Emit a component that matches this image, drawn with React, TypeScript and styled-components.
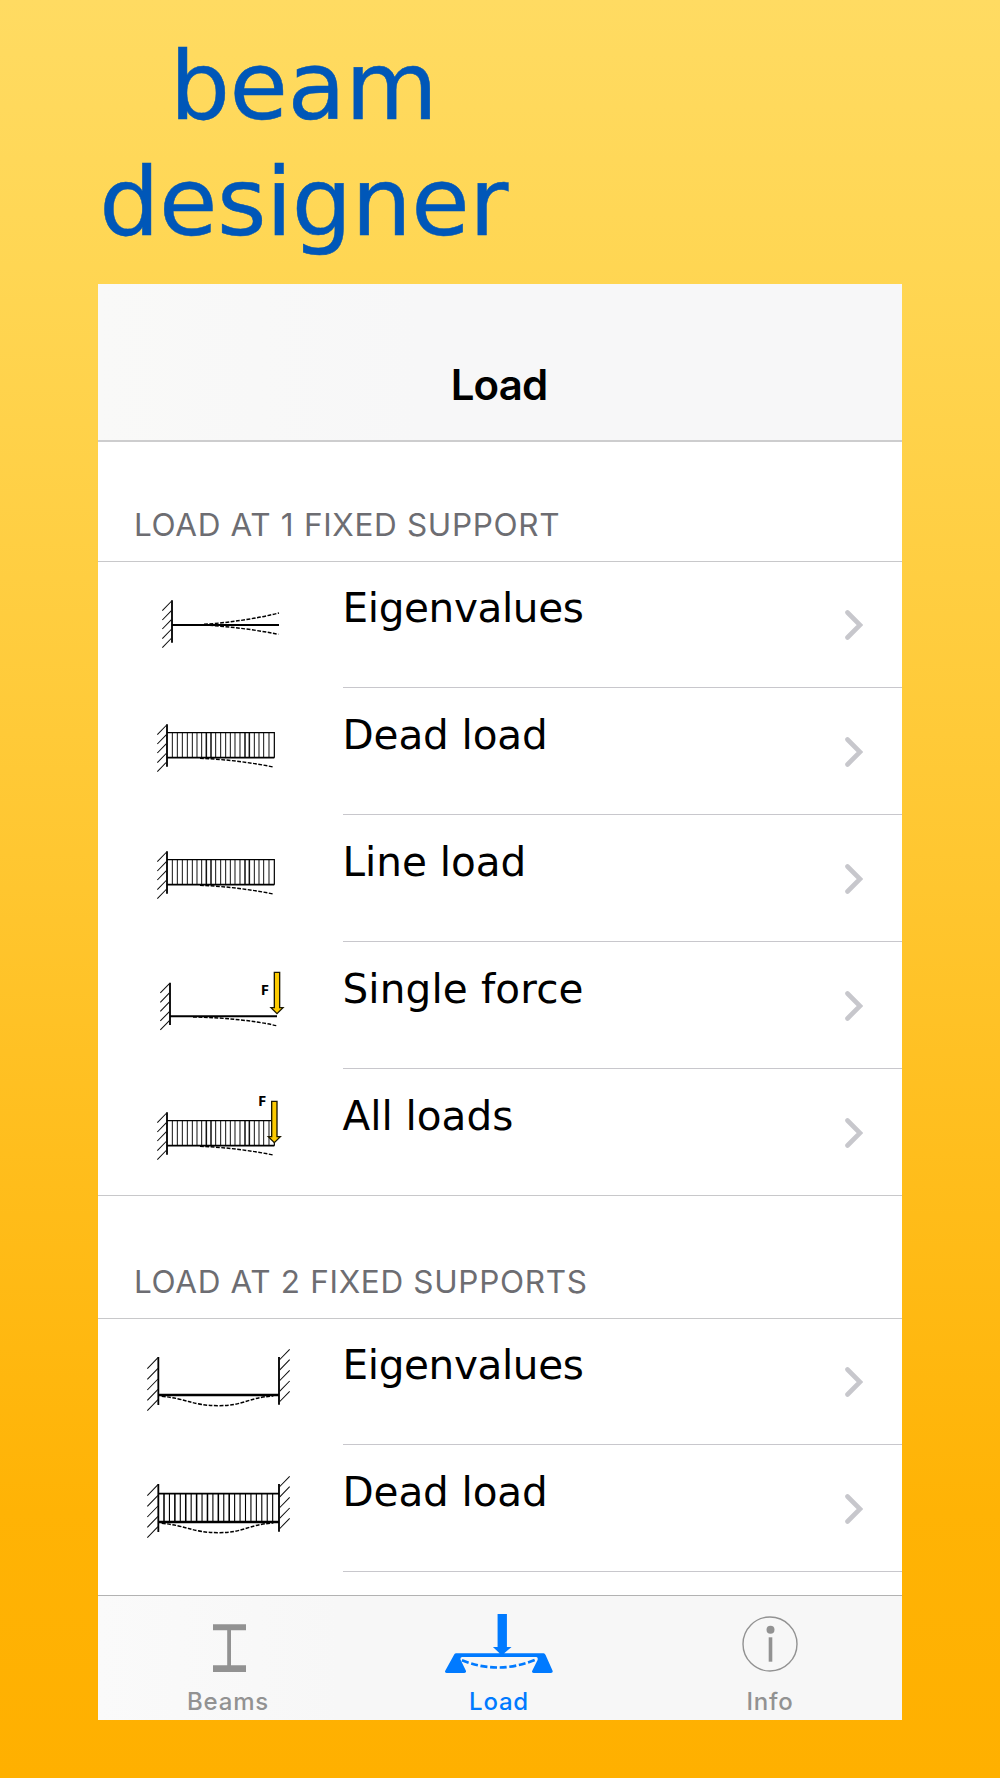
import React from "react";
import styled, { createGlobalStyle } from "styled-components";

const Global = createGlobalStyle`
  html, body { margin: 0; padding: 0; }
  body { font-family: Inter, "Liberation Sans", sans-serif; }
`;

const Poster = styled.div`
  box-sizing: border-box;
  width: 1000px;
  height: 1778px;
  padding: 28px 98px 58px 98px;
  display: flex;
  flex-direction: column;
  background: linear-gradient(180deg, #ffdb62 0%, #ffd653 15%, #ffc62f 50%, #ffb305 85%, #ffb000 100%);
  overflow: hidden;
`;

const Title = styled.h1`
  margin: 0;
  width: 411px;
  height: 256px;
  font: 400 95px/116px Verdana, "DejaVu Sans", sans-serif;
  letter-spacing: -0.5px;
  text-align: center;
  color: #0057b8;
  -webkit-text-stroke: 0.5px #0057b8;
`;

const Screen = styled.main`
  flex: none;
  width: 804px;
  height: 1435.5px;
  display: flex;
  flex-direction: column;
  background: #fff;
  overflow: hidden;
`;

const NavBar = styled.header`
  box-sizing: border-box;
  flex: none;
  height: 158px;
  padding: 75px 2px 0 0;
  border-bottom: 2px solid #cdcdce;
  background: linear-gradient(90deg, #f9f9f8, #f7f7f8 40%, #f7f7f8);
  font-size: 42px;
  font-weight: 600;
  line-height: 52px;
  letter-spacing: -0.9px;
  text-align: center;
  color: #000;
`;

const List = styled.div`
  flex: 1;
  min-height: 0;
  overflow: hidden;
`;

const SectionTitle = styled.h2<{ $height: number }>`
  box-sizing: border-box;
  margin: 0;
  height: ${(p) => p.$height}px;
  padding: 0 0 16px 36px;
  display: flex;
  align-items: flex-end;
  border-bottom: 1px solid #c8c8ca;
  font-size: 31.5px;
  font-weight: 400;
  line-height: 40px;
  letter-spacing: 0.67px;
  color: #6d6d72;
`;

const Row = styled.div<{ $first?: boolean; $last?: boolean }>`
  height: ${(p) => (p.$first ? 126 : 127)}px;
  display: flex;
  box-shadow: ${(p) => (p.$last ? "inset 0 -1px #c8c8ca" : "none")};
`;

const Diagram = styled.svg`
  flex: none;
  width: 245px;
  height: 126px;
  overflow: visible;
`;

const RowBody = styled.div<{ $first?: boolean; $last?: boolean }>`
  box-sizing: border-box;
  flex: 1;
  display: flex;
  justify-content: space-between;
  padding: ${(p) => (p.$first ? 0 : 1)}px 39px 0 0;
  border-bottom: 1px solid ${(p) => (p.$last ? "transparent" : "#c8c7cc")};
`;

const RowLabel = styled.span<{ $tracking?: number }>`
  margin-top: 21px;
  margin-left: -0.5px;
  font: 400 40.5px/50px Verdana, "DejaVu Sans", sans-serif;
  letter-spacing: ${(p) => p.$tracking ?? 0}px;
  color: #000;
`;

const Chevron = styled.svg`
  width: 18px;
  height: 30px;
  margin-top: 48px;
`;

const TabBar = styled.nav`
  box-sizing: border-box;
  flex: none;
  height: 124.5px;
  display: flex;
  justify-content: space-between;
  padding-right: 2px;
  border-top: 1px solid #b2b2b2;
  background: linear-gradient(90deg, #fafafa, #f7f7f7 30%, #f7f7f7);
`;

const Tab = styled.div<{ $active?: boolean }>`
  width: 260px;
  display: flex;
  flex-direction: column;
  align-items: center;
  color: ${(p) => (p.$active ? "#007aff" : "#929292")};
  font-size: 24px;
  font-weight: 500;
  line-height: 30px;
  letter-spacing: 0.8px;
`;

const TabIcon = styled.svg`
  width: 120px;
  height: 91px;
`;

type Pt = [number, number];

const Hatches = ({ starts, dx, dy }: { starts: Pt[]; dx: number; dy: number }) => (
  <path
    d={starts.map(([x, y]) => `M${x} ${y}l${dx} ${dy}`).join("")}
    stroke="#111"
    strokeWidth="3.2"
    fill="none"
  />
);

const Wall = ({ x, y, height = 127 }: { x: number; y: number; height?: number }) => (
  <>
    <path d={`M${x} ${y}v${height}`} stroke="#000" strokeWidth="5.5" />
    <Hatches starts={[2, 30, 57, 86, 113].map((o) => [x - 1, y + o] as Pt)} dx={-28} dy={29} />
  </>
);

const Dashed = ({ d }: { d: string }) => (
  <path d={d} fill="none" stroke="#000" strokeWidth="4.4" strokeDasharray="11.5 4.5" />
);

const Force = ({ x, y, labelY }: { x: number; y: number; labelY: number }) => (
  <>
    <path
      d={`M${x - 8} ${y}h16v106h10l-18 18l-18-18h10z`}
      fill="#fdcb00"
      stroke="#1c1800"
      strokeWidth="4"
    />
    <text
      x={x - 49}
      y={labelY}
      fontFamily='"Open Sans", sans-serif'
      fontWeight="700"
      fontSize="45"
    >
      F
    </text>
  </>
);

const BARS = [97, 112, 127, 142, 157, 171, 185, 199, 213, 227, 242, 257, 271, 285, 300, 315, 328, 343, 357, 371, 387];
const HEAVY = [199, 213, 315, 328];

const LoadedCantilever = ({ force }: { force?: boolean }) => (
  <g>
    <Wall x={81} y={433} />
    {BARS.map((x) => (
      <path
        key={x}
        d={`M${x} 458V533`}
        stroke="#111"
        strokeWidth={HEAVY.includes(x) ? 4.6 : 3}
      />
    ))}
    <path d="M81 458H403V533" fill="none" stroke="#000" strokeWidth="3.6" />
    <path d="M81 533H403" stroke="#000" strokeWidth="5" />
    <Dashed d="M180 535Q290 539 400 561" />
    {force && <Force x={403} y={400} labelY={414} />}
  </g>
);

const Cantilever = ({ force }: { force?: boolean }) => (
  <g>
    <Wall x={96} y={61} />
    {force ? (
      <>
        <path d="M96 162H417" stroke="#000" strokeWidth="6" />
        <Dashed d="M165 164Q310 167 415 190" />
        <Force x={417} y={30} labelY={97} />
      </>
    ) : (
      <>
        <path d="M96 135H417" stroke="#000" strokeWidth="6" />
        <Dashed d="M192 133Q310 125 417 99" />
        <Dashed d="M192 135Q310 142 415 163" />
      </>
    )}
  </g>
);

const FixedBoth = ({ loaded }: { loaded?: boolean }) => (
  <g>
    <path d="M85 81V225M447 81V224" stroke="#000" strokeWidth="5.5" />
    <Hatches starts={[83, 115, 147, 178, 209].map((y) => [84, y] as Pt)} dx={-32} dy={33} />
    <Hatches starts={[90, 121, 153, 185, 216].map((y) => [448, y] as Pt)} dx={31} dy={-32} />
    {loaded && (
      <>
        <path d="M85 110H447" stroke="#000" strokeWidth="5" />
        {Array.from({ length: 21 }, (_, i) => 102 + i * 16.3).map((x, i) => (
          <path
            key={i}
            d={`M${x} 110V194`}
            stroke="#000"
            strokeWidth={[0, 2, 4, 6, 8, 10, 12].includes(i) ? 4.6 : 3.3}
          />
        ))}
      </>
    )}
    <path d="M85 195H447" stroke="#000" strokeWidth="7" />
    <Dashed d="M95 199C170 205 185 227 265 227C345 227 350 203 430 198" />
  </g>
);

const DRAWINGS: Record<string, { dx: number; dy: number; node: React.ReactNode }> = {
  swing: { dx: 42, dy: 18, node: <Cantilever /> },
  dead: { dx: 42, dy: -108, node: <LoadedCantilever /> },
  force: { dx: 40, dy: 20.3, node: <Cantilever force /> },
  all: { dx: 42, dy: -101, node: <LoadedCantilever force /> },
  fixed: { dx: 32, dy: 11, node: <FixedBoth /> },
  fixedDead: { dx: 32, dy: 12, node: <FixedBoth loaded /> },
};

type Item = { label: string; drawing: string; tracking?: number; last?: boolean };

const SECTIONS: { title: string; height: number; items: Item[] }[] = [
  {
    title: "LOAD AT 1 FIXED SUPPORT",
    height: 120,
    items: [
      { label: "Eigenvalues", drawing: "swing", tracking: -0.35 },
      { label: "Dead load", drawing: "dead", tracking: -0.1 },
      { label: "Line load", drawing: "dead" },
      { label: "Single force", drawing: "force", tracking: 0.15 },
      { label: "All loads", drawing: "all", last: true },
    ],
  },
  {
    title: "LOAD AT 2 FIXED SUPPORTS",
    height: 123,
    items: [
      { label: "Eigenvalues", drawing: "fixed", tracking: -0.35 },
      { label: "Dead load", drawing: "fixedDead", tracking: -0.1 },
    ],
  },
];

const ListRow = ({ item, first }: { item: Item; first: boolean }) => {
  const drawing = DRAWINGS[item.drawing];
  return (
    <Row $first={first} $last={item.last}>
      <Diagram viewBox="0 0 245 126">
        <g transform={`translate(${drawing.dx} ${drawing.dy}) scale(0.33333)`}>{drawing.node}</g>
      </Diagram>
      <RowBody $first={first} $last={item.last}>
        <RowLabel $tracking={item.tracking}>{item.label}</RowLabel>
        <Chevron viewBox="0 0 18 30">
          <path
            d="M2.500 2.500L15 15L2.500 27.500"
            fill="none"
            stroke="#c7c7cc"
            strokeWidth="4.6"
            strokeLinecap="round"
          />
        </Chevron>
      </RowBody>
    </Row>
  );
};

export default function App() {
  return (
    <>
      <Global />
      <Poster>
        <Title>
          beam
          <br />
          designer
        </Title>
        <Screen>
          <NavBar>Load</NavBar>
          <List>
            {SECTIONS.map((section) => (
              <section key={section.title}>
                <SectionTitle $height={section.height}>{section.title}</SectionTitle>
                {section.items.map((item, i) => (
                  <ListRow key={i} item={item} first={i === 0} />
                ))}
              </section>
            ))}
          </List>
          <TabBar>
            <Tab>
              <TabIcon viewBox="0 0 120 91">
                <path d="M45 28.3h33v6h-33zM59.200 34h3.800v36h-3.800zM45 69.200h33v6.800h-33z" fill="currentColor" />
              </TabIcon>
              Beams
            </Tab>
            <Tab $active>
              <TabIcon viewBox="0 0 120 91">
                <g transform="translate(-8.75 4) scale(0.33333)">
                  <path
                    d="M202 42H230V141H244L222 160H340Q344 160 346 165L367 212Q369 219 362 219H310Q303 219 306 212L322 180Q324 172 318 171H96Q89 172 91 179L107 212Q109 219 102 219H49Q42 219 45 212L71 165Q73 160 77 160H208L188 141H202Z"
                    fill="currentColor"
                  />
                  <path
                    d="M95 181Q207 226 320 177"
                    fill="none"
                    stroke="currentColor"
                    strokeWidth="8"
                    strokeDasharray="21 8"
                  />
                </g>
              </TabIcon>
              Load
            </Tab>
            <Tab>
              <TabIcon viewBox="0 0 120 91">
                <circle cx="60" cy="48" r="27" fill="none" stroke="currentColor" strokeWidth="1.4" />
                <circle cx="60.5" cy="33.7" r="4" fill="currentColor" />
                <path d="M58.700 41.300h3.600v24.400h-3.600z" fill="currentColor" />
              </TabIcon>
              Info
            </Tab>
          </TabBar>
        </Screen>
      </Poster>
    </>
  );
}
